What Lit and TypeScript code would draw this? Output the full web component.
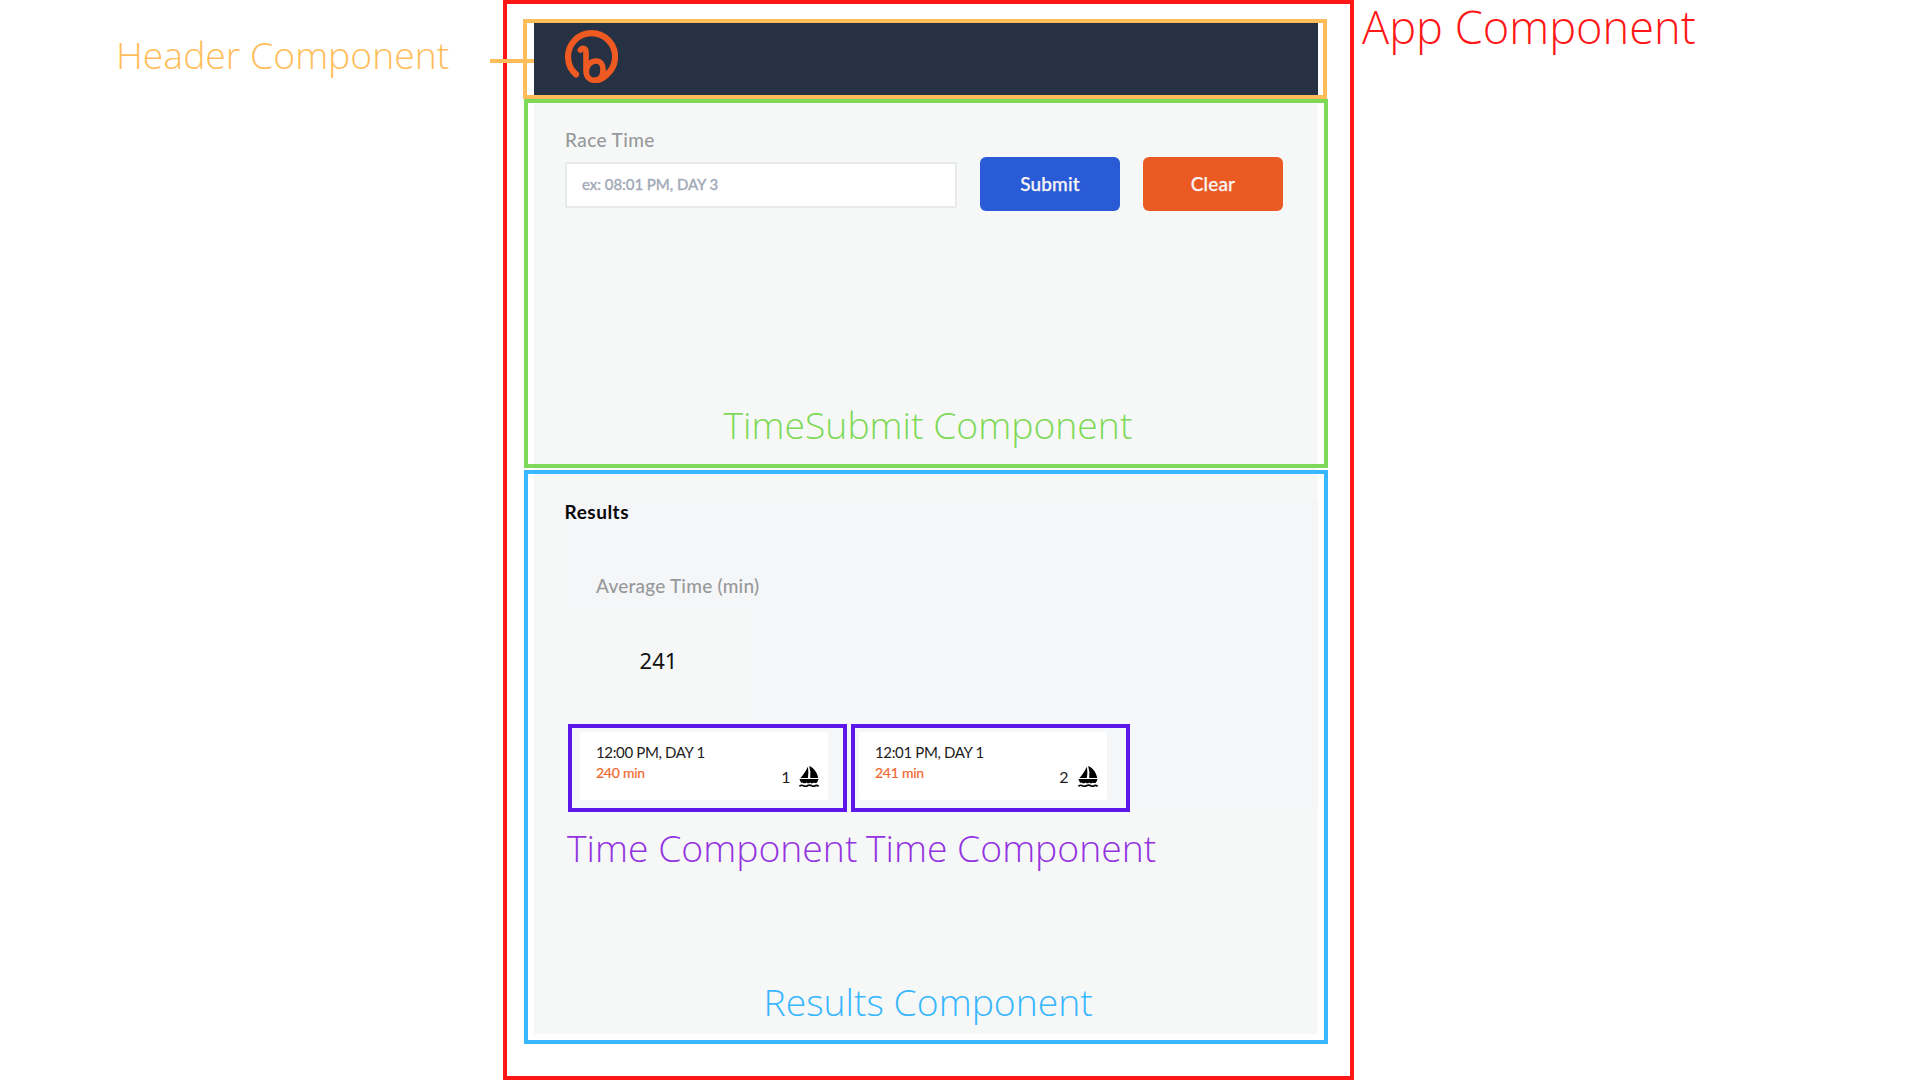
import { LitElement, html, css, svg } from "lit";
import { customElement, property } from "lit/decorators.js";

const label = css`
  .label {
    font: 300 37.33px/52px "Open Sans", sans-serif;
    white-space: nowrap;
  }
`;

const logo = svg`
  <g fill="none" stroke="#ee5a22" stroke-linecap="round" stroke-linejoin="round">
    <path stroke-width="18.5" d="M33 133 A70.5 70.5 0 1 1 125 134 Q113 146 96 150" />
    <path stroke-width="17" d="M46 60 C51 53 63 53 63 68 V122 C63 140 74 151 90 151 C106 151 114 138 114 119 C114 102 106 93 93 93 C78 93 65 105 64 122" />
  </g>`;

const boat = svg`
  <path d="M30 0 C43 5 54 18 57 36 H33 Q36 18 30 0 Z" />
  <path d="M26 2 C28 13 28 25 26 36 H4 C12 27 20 15 26 2 Z" />
  <path d="M1 39 H58 L54 48 Q49 53 44 49 Q38 54 33 49 Q28 54 22 49 Q16 54 11 49 Q7 51 5 48 Z" />
  <path d="M1 60.5 Q7 55 13 59 Q20 62 26 58 Q32 55 38 59 Q44 62 49 58 Q54 56 58 60.5" fill="none" stroke="#000" stroke-width="5" />`;

@customElement("header-bar")
class HeaderBar extends LitElement {
  static styles = css`
    :host {
      display: block;
      position: relative;
      box-sizing: border-box;
      width: 804px;
      height: 80px;
      margin: 15px 0 0 16px;
      padding: 0 5.5px 0 7px;
      border: 4px solid #ffbd59;
    }
    .bar {
      display: flex;
      align-items: center;
      height: 72px;
      padding-left: 30.6px;
      background: #263143;
    }
    .logo {
      width: 53.4px;
      height: 53.4px;
      margin-top: -4.5px;
    }
    .connector {
      position: absolute;
      left: -37px;
      top: 36px;
      width: 44px;
      height: 4px;
      background: #ffbd59;
    }
  `;
  render() {
    return html`
      <div class="bar"><svg class="logo" viewBox="0 0 160 160">${logo}</svg></div>
      <div class="connector"></div>
    `;
  }
}

@customElement("time-submit")
class TimeSubmit extends LitElement {
  static styles = [
    label,
    css`
      :host {
        display: flex;
        flex-direction: column;
        box-sizing: border-box;
        width: 804px;
        height: 369px;
        padding: 25px 0 13px 37px;
        border: 4px solid #7ed957;
        font-family: Lato, sans-serif;
      }
      .form {
        display: grid;
        grid-template-columns: 392px 140px 140px;
        column-gap: 23px;
        align-items: end;
      }
      .field {
        display: flex;
        flex-direction: column;
        gap: 10px;
        padding-bottom: 3px;
      }
      .name {
        font: 500 19px/24px Lato, sans-serif;
        letter-spacing: 0.4px;
        color: #97999a;
      }
      .input {
        box-sizing: border-box;
        height: 46px;
        width: 392px;
        padding: 0 0 2px 15px;
        border: 2px solid #e8eaea;
        border-radius: 2px;
        background: #fff;
        font: 500 15px Lato, sans-serif;
      }
      .input::placeholder {
        color: #a3aab8;
        opacity: 1;
        letter-spacing: -0.05px;
        -webkit-text-stroke: 0.3px #a3aab8;
      }
      .button {
        height: 54px;
        padding: 0 0 2px;
        border: 0;
        border-radius: 6px;
        color: #f8f5f5;
        font: 500 19px Lato, sans-serif;
        letter-spacing: 0.15px;
        -webkit-text-stroke: 0.25px #f8f5f5;
      }
      .submit {
        background: #295bd7;
      }
      .clear {
        background: #eb5a23;
      }
      .label {
        margin: auto 0 0 158.5px;
        color: #7ed957;
      }
    `,
  ];
  render() {
    return html`
      <div class="form">
        <div class="field">
          <div class="name">Race Time</div>
          <input class="input" placeholder="ex: 08:01 PM, DAY 3" />
        </div>
        <button class="button submit">Submit</button>
        <button class="button clear">Clear</button>
      </div>
      <div class="label">TimeSubmit Component</div>
    `;
  }
}

@customElement("race-time")
class RaceTime extends LitElement {
  @property() time = "";
  @property() minutes = "";
  @property() place = "";
  static styles = css`
    :host {
      display: block;
      box-sizing: border-box;
      width: 279px;
      height: 88px;
      padding: 4px 0 0 8.5px;
      border: 4px solid #5e17eb;
      font-family: Lato, sans-serif;
    }
    :host(.second) {
      padding-left: 4px;
    }
    .card {
      display: flex;
      justify-content: space-between;
      box-sizing: border-box;
      width: 248px;
      height: 68px;
      padding: 10px 9px 12.5px 16px;
      border-radius: 2px;
      background: #fff;
    }
    .time {
      font-size: 15px;
      line-height: 20px;
      letter-spacing: -0.35px;
      color: #1c1c1c;
    }
    .minutes {
      margin-top: 1px;
      font-size: 14px;
      line-height: 20px;
      letter-spacing: -0.25px;
      color: #f2672f;
      -webkit-text-stroke: 0.2px #f2672f;
    }
    .place {
      display: flex;
      align-items: flex-end;
      gap: 8.5px;
      font-size: 16px;
      line-height: 20px;
      color: #222;
    }
    :host(.second) .place {
      gap: 9.5px;
    }
    .number {
      padding-bottom: 1px;
    }
    .boat {
      width: 20px;
      height: 21.5px;
    }
  `;
  render() {
    return html`
      <div class="card">
        <div>
          <div class="time">${this.time}</div>
          <div class="minutes">${this.minutes}</div>
        </div>
        <div class="place">
          <span class="number">${this.place}</span>
          <svg class="boat" viewBox="0 0 59 64">${boat}</svg>
        </div>
      </div>
    `;
  }
}

@customElement("race-results")
class RaceResults extends LitElement {
  static styles = [
    label,
    css`
      :host {
        display: flex;
        flex-direction: column;
        box-sizing: border-box;
        width: 804px;
        height: 574px;
        margin-top: 2px;
        padding: 25px 6.5px 12.5px 36px;
        border: 4px solid #38b6ff;
        font-family: Lato, sans-serif;
      }
      .body {
        display: flow-root;
        height: 311px;
        background: #f5f6f8;
      }
      .title {
        margin: 1px 0 0 0.6px;
        font-size: 19px;
        font-weight: 700;
        line-height: 24px;
        letter-spacing: 0.5px;
        color: #080808;
      }
      .name {
        margin: 50px 0 0 32px;
        font-size: 19px;
        font-weight: 500;
        line-height: 24px;
        letter-spacing: 0.22px;
        color: #97999b;
      }
      .average {
        box-sizing: border-box;
        width: 187px;
        height: 107px;
        margin-top: 10px;
        padding-left: 2px;
        background: #f6f8f8;
        font: 400 22px/105px "Noto Sans", sans-serif;
        text-align: center;
        color: #111;
      }
      .times {
        display: flex;
        gap: 4.5px;
        margin: 9px 0 0 3.5px;
      }
      .labels {
        display: flex;
        gap: 8.5px;
        margin: 12px 0 0 3px;
        color: #9333e0;
      }
      .bottom {
        margin: auto 0 0 199.5px;
        color: #38b6ff;
      }
    `,
  ];
  render() {
    return html`
      <div class="body">
        <div class="title">Results</div>
        <div class="name">Average Time (min)</div>
        <div class="average">241</div>
        <div class="times">
          <race-time time="12:00 PM, DAY 1" minutes="240 min" place="1"></race-time>
          <race-time class="second" time="12:01 PM, DAY 1" minutes="241 min" place="2"></race-time>
        </div>
      </div>
      <div class="labels">
        <div class="label">Time Component</div>
        <div class="label">Time Component</div>
      </div>
      <div class="label bottom">Results Component</div>
    `;
  }
}

@customElement("app-root")
class AppRoot extends LitElement {
  static styles = [
    label,
    css`
      :host {
        display: grid;
        grid-template-columns: 503px 851px 1fr;
        width: 1920px;
        height: 1080px;
        overflow: hidden;
        background: #fff;
      }
      .header-label {
        margin: 28.5px 0 0 116px;
        color: #ffbd59;
      }
      .app-label {
        margin-left: 8px;
        font-size: 45.2px;
        line-height: 54px;
        color: #ff1616;
      }
      .frame {
        box-sizing: border-box;
        height: 1080px;
        border: 4px solid #ff1616;
      }
      .content {
        width: 804px;
        margin-left: 17px;
        background: linear-gradient(#f6f8f8, #f6f8f8) 10px 0 / 783.5px 935px no-repeat;
      }
    `,
  ];
  render() {
    return html`
      <div class="label header-label">Header Component</div>
      <div class="frame">
        <header-bar></header-bar>
        <div class="content">
          <time-submit></time-submit>
          <race-results></race-results>
        </div>
      </div>
      <div class="label app-label">App Component</div>
    `;
  }
}
